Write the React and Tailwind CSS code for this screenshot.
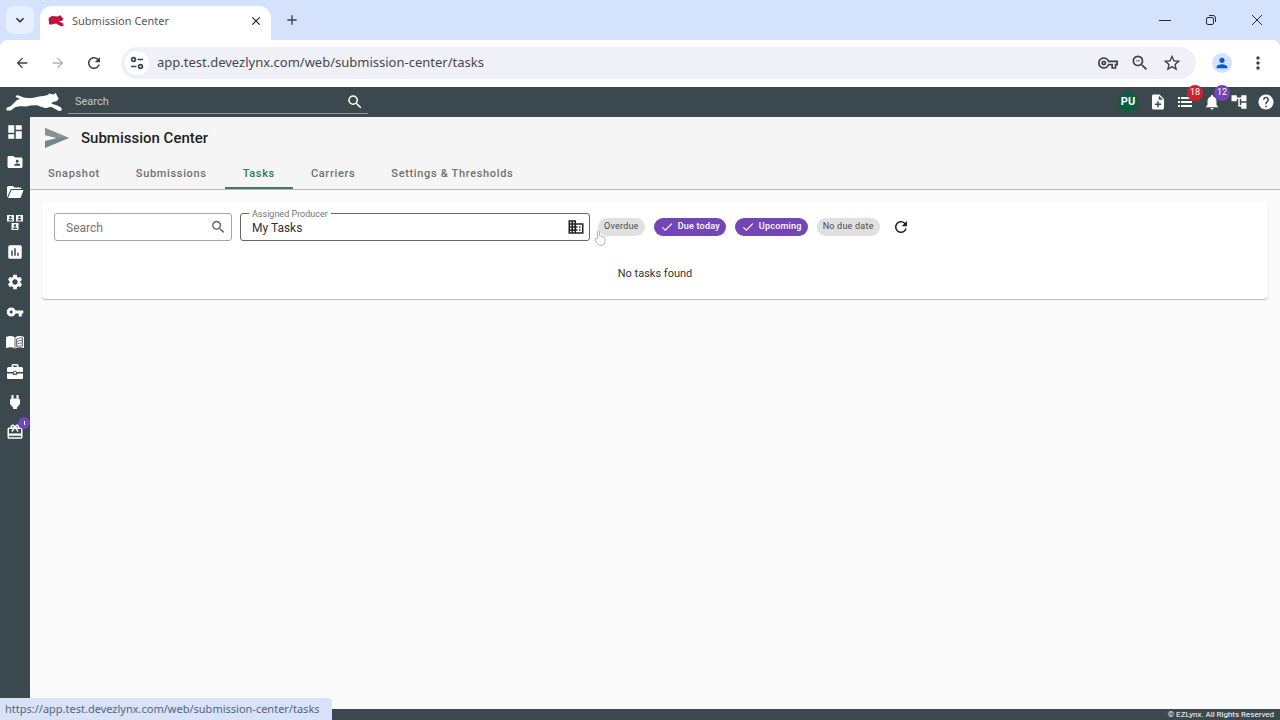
import React, { useState } from 'react';
import {
  MdAccountTree,
  MdAdd,
  MdArrowBack,
  MdArrowForward,
  MdAssessment,
  MdBusiness,
  MdCheck,
  MdClose,
  MdDashboard,
  MdExpandMore,
  MdFolderShared,
  MdHelp,
  MdMoreVert,
  MdNoteAdd,
  MdNotifications,
  MdOutlineVpnKey,
  MdPerson,
  MdRedeem,
  MdRefresh,
  MdSearch,
  MdSettings,
  MdStarBorder,
  MdVpnKey,
  MdZoomOut,
} from 'react-icons/md';

const LynxLogo = ({ className }) => (
  <svg viewBox="0 0 170 60" className={className} fill="currentColor" aria-hidden="true">
    <path d="M29 14Q31 9 38 10L54 16Q70 19 84 17Q100 12 118 11L128 8Q132 2 136 6L144 7L150 3Q154 6 155 12L159 18Q160 25 153 28L142 30L138 35L154 40L166 46Q171 50 168 56Q160 59 155 54L140 46L122 43Q129 43 131 46Q122 51 108 45L94 40Q76 39 62 44Q48 42 36 44L26 47L17 54Q9 57 2 55Q-1 49 5 46L14 43L24 33Q32 23 42 20Q35 19 29 14Z" />
  </svg>
);

const FaviconLynx = () => (
  <svg viewBox="0 0 44 34" className="h-3 w-4 text-[#c41240]" fill="currentColor" aria-hidden="true">
    <path d="M1 9L10 3L27 4L35 1L38 6L43 10L39 17L30 17L43 25L43 32L34 31L22 24L10 27L3 27L2 21Z" />
  </svg>
);

const SiteControlsIcon = () => (
  <svg viewBox="0 0 16 16" className="size-4" fill="none" stroke="currentColor" strokeWidth="1.7" aria-hidden="true">
    <circle cx="4.5" cy="4.5" r="1.9" />
    <path d="M8.5 4.5H14M2 11.5H7.5" />
    <circle cx="11.5" cy="11.5" r="1.9" />
  </svg>
);

const RestoreIcon = () => (
  <svg viewBox="0 0 12 12" className="size-3" fill="none" stroke="currentColor" aria-hidden="true">
    <rect x="1.5" y="3.5" width="7" height="7" rx="1.5" />
    <path d="M4 1.5H8Q10.5 1.5 10.5 4V8" />
  </svg>
);

const ListIcon = ({ className }) => (
  <svg viewBox="0 0 18 18" className={className} fill="currentColor" aria-hidden="true">
    <path d="M2 4h2v2H2zM5 4h11v2H5zM2 8h2v2H2zM5 8h11v2H5zM2 12h2v2H2zM5 12h11v2H5z" />
  </svg>
);

const OpenFolderIcon = ({ className }) => (
  <svg viewBox="0 0 18 18" className={className} fill="currentColor" aria-hidden="true">
    <path d="M1 4.5Q1 3 2.5 3H7l1.5 1.5H14Q15.5 4.5 15.5 6H4.8L1 14.5z" />
    <path d="M5.5 7H17.5L15 14Q14.6 15 13.5 15H2z" />
  </svg>
);

const ContactsIcon = ({ className }) => (
  <svg viewBox="0 0 18 18" className={className} aria-hidden="true">
    <path fill="currentColor" d="M1 2h7v6.500H1zM10 2h7v6.500h-7zM5.500 10h7v7h-7z" />
    <g fill="#3b484e">
      <circle cx="4.5" cy="4.3" r="1.2" />
      <path d="M2.3 7.6q0-1.8 2.2-1.800T6.700 7.600z" />
      <circle cx="13.5" cy="4.3" r="1.2" />
      <path d="M11.3 7.6q0-1.8 2.2-1.800T15.700 7.600z" />
      <circle cx="9" cy="12.5" r="1.2" />
      <path d="M6.8 16q0-1.8 2.2-1.800t2.200 1.800z" />
    </g>
  </svg>
);

const BookIcon = ({ className }) => (
  <svg viewBox="0 0 18 18" className={className} aria-hidden="true">
    <path fill="currentColor" d="M0 4Q5 2 9 4.5Q13 2 18 4V15Q13 13.5 9 15.5Q5 13.5 0 15Z" />
    <path fill="none" stroke="#3b484e" strokeWidth="0.8" d="M9 4.5V15M10.5 6Q13 4.5 16.5 5V13Q13 12.5 10.5 13.5ZM11 8.5Q13 7.3 16 7.5M11 11Q13 9.8 16 10" />
  </svg>
);

const ToolboxIcon = ({ className }) => (
  <svg viewBox="0 0 18 18" className={className} aria-hidden="true">
    <path fill="currentColor" fillRule="evenodd" d="M5.5 4V2.5Q5.5 1 7 1h4Q12.5 1 12.5 2.5V4h3Q17 4 17 5.5V9H1V5.5Q1 4 2.5 4zM7.2 4h3.6V2.5H7.2zM1 10.5h5.500L7.500 12h3l1-1.500H17V15q0 1-1 1H2q-1 0-1-1z" />
    <circle cx="9" cy="9.8" r="1.6" fill="currentColor" stroke="#3b484e" />
  </svg>
);

const PlugIcon = ({ className }) => (
  <svg viewBox="0 0 18 18" className={className} fill="currentColor" aria-hidden="true">
    <path d="M5.500 2h2v3.500h3V2h2v3.500q1.500 0 1.500 2V11l-3 3.500V16H7v-1.500L4 11V7.500q0-2 1.500-2z" />
  </svg>
);

const SubmissionIcon = () => (
  <svg viewBox="0 0 24 20" className="h-5 w-6" aria-hidden="true">
    <path fill="#74868b" d="M0 0L24 10L0 20V13L12 10L0 7Z" />
    <path fill="#84959a" d="M0 0L24 10H12L0 7Z" />
  </svg>
);

const HandCursor = () => (
  <svg viewBox="0 0 12 16" className="pointer-events-none absolute -left-1 top-3 h-4 w-3" fill="#fff" stroke="#b4b4b4" aria-hidden="true">
    <path d="M3.5 9V2Q3.5 0.8 4.5 0.8T5.5 2V6Q7 5.3 7.5 6.5Q9 6 9.3 7.2Q11 6.8 11 8.5V11Q11 15.2 7.5 15.2H6Q4 15.2 3 13L1 10Q0.8 8.5 2.2 8.6Z" />
  </svg>
);

const sideItems = [
  { label: 'Dashboard', Icon: MdDashboard },
  { label: 'Accounts', Icon: MdFolderShared },
  { label: 'Files', Icon: OpenFolderIcon },
  { label: 'Contacts', Icon: ContactsIcon },
  { label: 'Reports', Icon: MdAssessment },
  { label: 'Settings', Icon: MdSettings },
  { label: 'Keys', Icon: MdVpnKey },
  { label: 'Library', Icon: BookIcon },
  { label: 'Toolbox', Icon: ToolboxIcon },
  { label: 'Integrations', Icon: PlugIcon },
  { label: "What's new", Icon: MdRedeem, badge: true },
];

const tabs = ['Snapshot', 'Submissions', 'Tasks', 'Carriers', 'Settings & Thresholds'];

const BrowserBar = () => (
  <div className="bg-[#d5e2fc] font-['Noto_Sans',sans-serif] text-[#3c4043]">
    <div className="flex h-10 items-center pl-1.5">
      <button aria-label="Search tabs" className="flex size-7 items-center justify-center rounded-lg bg-[#e6effe] text-[#1f2023]">
        <MdExpandMore className="size-4" />
      </button>
      <div className="ml-1.5 flex h-[34px] w-[231px] items-center self-end rounded-t-xl bg-white pb-1 pl-2 pr-2">
        <FaviconLynx />
        <span className="ml-2 grow text-[11px] text-[#55585c]">Submission Center</span>
        <button aria-label="Close tab" className="text-[#1f2023]">
          <MdClose className="size-3.5" />
        </button>
      </div>
      <button aria-label="New tab" className="ml-[13px] text-[#3c4043]">
        <MdAdd className="size-4" />
      </button>
      <div className="ml-auto flex items-center gap-[34px] pr-[17px] text-[#1f2a44]">
        <button aria-label="Minimize" className="flex h-3 w-3 items-center">
          <span className="h-px w-full bg-current" />
        </button>
        <button aria-label="Restore">
          <RestoreIcon />
        </button>
        <button aria-label="Close window">
          <svg viewBox="0 0 12 12" className="size-3" stroke="currentColor" aria-hidden="true">
            <path d="M1 1L11 11M11 1L1 11" />
          </svg>
        </button>
      </div>
    </div>
    <div className="flex h-[47px] items-center rounded-t-lg bg-white pb-px pl-3.5 pr-3">
      <button aria-label="Back">
        <MdArrowBack className="size-4" />
      </button>
      <button aria-label="Forward" className="ml-5 text-[#b0b1b4]">
        <MdArrowForward className="size-4" />
      </button>
      <button aria-label="Reload" className="ml-[19px]">
        <MdRefresh className="size-[18px]" />
      </button>
      <div className="ml-[18px] flex h-8 grow items-center rounded-full bg-[#f0f0f8] pl-1 pr-3.5">
        <button aria-label="Site information" className="flex size-6 items-center justify-center rounded-full bg-white">
          <SiteControlsIcon />
        </button>
        <input
          aria-label="Address"
          defaultValue="app.test.devezlynx.com/web/submission-center/tasks"
          className="ml-2 grow bg-transparent text-[13px] text-[#45474d] outline-none"
        />
        <div className="flex items-center gap-3">
          <button aria-label="Passwords">
            <MdOutlineVpnKey className="size-5" />
          </button>
          <button aria-label="Zoom">
            <MdZoomOut className="size-5" />
          </button>
          <button aria-label="Bookmark">
            <MdStarBorder className="size-5" />
          </button>
        </div>
      </div>
      <button aria-label="Profile" className="ml-4 flex size-5 items-center justify-center rounded-full bg-[#d3e3fd] text-[#0b57d0]">
        <MdPerson className="size-4" />
      </button>
      <button aria-label="Browser menu" className="ml-4">
        <MdMoreVert className="size-5" />
      </button>
    </div>
  </div>
);

const AppHeader = () => (
  <header className="flex h-[30px] items-center bg-[#3b484e] pl-1.5 pr-[5px] text-white">
    <LynxLogo className="h-5 w-14" />
    <div className="ml-1.5 flex h-6 w-[300px] items-center border-b border-[#8495a5] pl-[7px] pr-1">
      <input
        aria-label="Search"
        placeholder="Search"
        className="min-w-0 grow bg-transparent pt-0.5 text-[11px] outline-none placeholder:text-[#c3cacd]"
      />
      <MdSearch className="size-[18px]" />
    </div>
    <div className="ml-auto flex items-center gap-[9px]">
      <button className="flex size-5 items-center justify-center rounded-full bg-[#08603f] text-[11px] font-bold">PU</button>
      <button aria-label="New note" className="ml-0.5">
        <MdNoteAdd className="size-[18px]" />
      </button>
      <button aria-label="Lists" className="relative">
        <ListIcon className="size-[18px]" />
        <span className="absolute -top-2 left-[11px] flex size-4 items-center justify-center rounded-full bg-[#d2202f] text-[9px]">18</span>
      </button>
      <button aria-label="Notifications" className="relative">
        <MdNotifications className="size-[18px]" />
        <span className="absolute -top-2 left-[11px] flex size-4 items-center justify-center rounded-full bg-[#7346b8] text-[9px]">12</span>
      </button>
      <button aria-label="Site map">
        <MdAccountTree className="size-[18px]" />
      </button>
      <button aria-label="Help">
        <MdHelp className="size-[18px]" />
      </button>
    </div>
  </header>
);

const Sidebar = () => (
  <nav className="w-[30px] shrink-0 bg-[#3b484e] text-white">
    {sideItems.map(({ label, Icon, badge }) => (
      <a key={label} href="#" aria-label={label} className="relative flex h-[30px] items-center justify-center">
        <Icon className="size-[18px]" />
        {badge && (
          <span className="absolute right-0 top-0 flex size-3 items-center justify-center rounded-full bg-[#7346b8]">
            <span className="h-1 w-px bg-white" />
          </span>
        )}
      </a>
    ))}
  </nav>
);

const Chip = ({ label, active, onClick }) => (
  <button
    onClick={onClick}
    aria-pressed={active}
    className={
      active
        ? 'flex h-[18px] items-center rounded-full bg-[#7346b8] px-1.5 text-[9px] font-medium tracking-wide text-white'
        : 'flex h-[18px] items-center rounded-full bg-[#e0e0e0] px-1.5 text-[9px] tracking-wide text-[#4a4a4a]'
    }
  >
    {active && <MdCheck className="mr-1 size-3.5" />}
    {label}
  </button>
);

const TaskPanel = () => {
  const [filters, setFilters] = useState({
    Overdue: false,
    'Due today': true,
    Upcoming: true,
    'No due date': false,
  });

  const toggle = (name) => setFilters({ ...filters, [name]: !filters[name] });

  return (
    <section className="mx-3 mt-3 rounded-sm bg-white px-3 pb-[17px] pt-[11px] shadow-[0_1px_1px_rgba(0,0,0,0.25)]">
      <div className="flex items-center gap-2">
        <div className="flex h-7 w-[178px] items-center rounded-[3px] border border-[#a6a6a6] pl-[11px] pr-1 text-[#666]">
          <input
            aria-label="Search tasks"
            placeholder="Search"
            className="min-w-0 grow bg-transparent pt-px text-xs outline-none placeholder:text-[#757575]"
          />
          <MdSearch className="size-[18px]" />
        </div>
        <div className="relative flex h-7 w-[350px] items-center rounded-[3px] border border-[#666] pl-[11px] pr-1">
          <label htmlFor="producer" className="absolute -top-1.5 left-2 bg-white px-[3px] text-[9px] leading-3 text-[#757575]">
            Assigned Producer
          </label>
          <input
            id="producer"
            defaultValue="My Tasks"
            className="min-w-0 grow bg-transparent pt-px text-xs text-[#333] outline-none"
          />
          <MdBusiness className="size-[18px] text-[#222]" />
        </div>
        <div className="relative flex gap-[9px]">
          {Object.keys(filters).map((name) => (
            <Chip key={name} label={name} active={filters[name]} onClick={() => toggle(name)} />
          ))}
          <HandCursor />
        </div>
        <button aria-label="Refresh tasks" className="ml-1 text-[#222]">
          <MdRefresh className="size-[18px]" />
        </button>
      </div>
      <p className="mt-[25px] text-center text-[11px] leading-4 text-[#333]">No tasks found</p>
    </section>
  );
};

const App = () => {
  const [activeTab, setActiveTab] = useState('Tasks');

  return (
    <div className="relative flex min-h-screen flex-col bg-[#fafafa] font-[Roboto,sans-serif]">
      <BrowserBar />
      <AppHeader />
      <div className="flex grow">
        <Sidebar />
        <main className="grow">
          <div className="border-b border-[#b8b8b8] bg-[#f5f5f5]">
            <div className="flex h-[42px] items-center gap-3 pl-[15px]">
              <SubmissionIcon />
              <h1 className="text-[15px] font-medium text-[#1f1f1f]">Submission Center</h1>
            </div>
            <div role="tablist" className="flex">
              {tabs.map((tab) => (
                <button
                  key={tab}
                  role="tab"
                  aria-selected={tab === activeTab}
                  onClick={() => setActiveTab(tab)}
                  className={
                    tab === activeTab
                      ? 'h-[30px] border-b-2 border-[#3f7a64] px-[18px] pt-0.5 text-[11px] font-medium tracking-[0.06em] text-[#34795b]'
                      : 'h-[30px] border-b-2 border-transparent px-[18px] pt-0.5 text-[11px] font-medium tracking-[0.06em] text-[#707070]'
                  }
                >
                  {tab}
                </button>
              ))}
            </div>
          </div>
          <TaskPanel />
        </main>
      </div>
      <footer className="h-[11px] bg-[#3b484e] pr-1.5 text-right text-[8px] leading-[11px] text-white">
        © EZLynx. All Rights Reserved
      </footer>
      <div className="absolute bottom-0 left-0 rounded-tr-sm bg-[#d8e3fa] pl-[5px] pr-3 font-['Noto_Sans',sans-serif] text-[11px] leading-[22px] text-[#56637a]">
        https://app.test.devezlynx.com/web/submission-center/tasks
      </div>
    </div>
  );
};

export default App;
